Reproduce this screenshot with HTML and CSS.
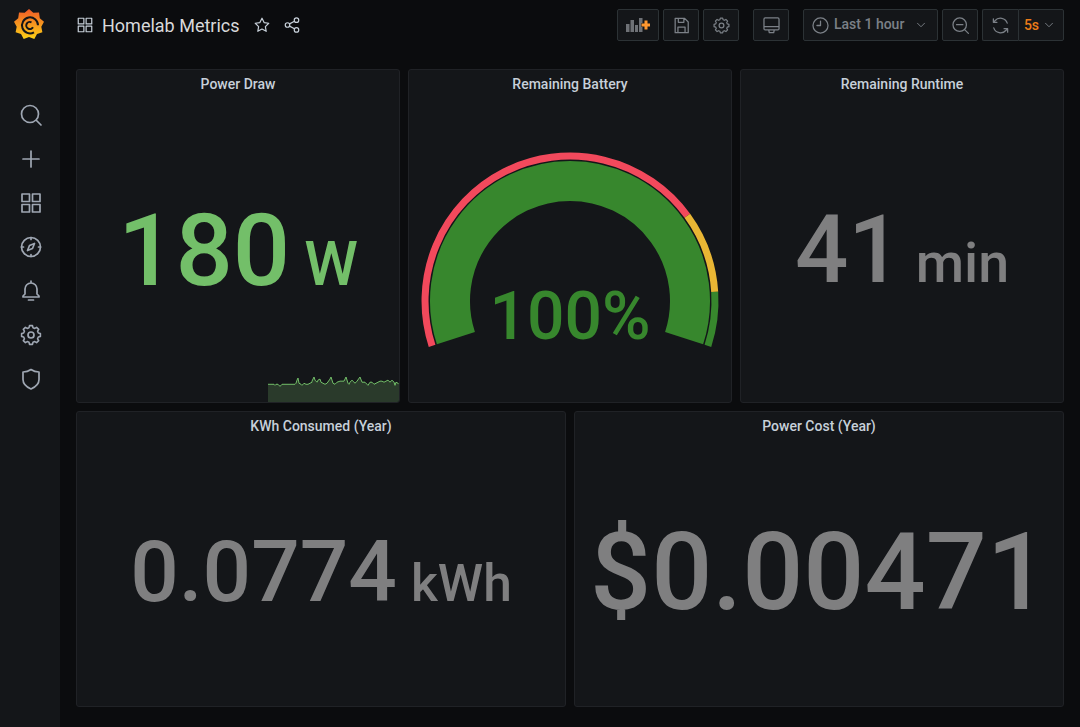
FILE: index.html
```html
<!DOCTYPE html>
<html lang="en">
<head>
  <meta charset="UTF-8">
  <title>Homelab Metrics</title>
  <link rel="stylesheet" href="styles.css">
</head>
<body>
  <nav class="sidemenu">
    <a class="logo">
      <svg width="30" height="31" viewBox="0 0 30 31">
        <defs>
          <linearGradient id="grafana" x1="0" y1="1" x2="0" y2="0">
            <stop offset="0" stop-color="#fcd116"/>
            <stop offset="1" stop-color="#f05a28"/>
          </linearGradient>
        </defs>
        <path fill="url(#grafana)" d="M15 0L19.300 3.750 25 3.600 25.800 9.250 30 12.800 27.300 17.700 28.400 23.300 23 25 20.300 30 15 28 9.700 30 7 25 1.600 23.300 2.700 17.700 0 12.800 4.200 9.250 5 3.600 10.700 3.750z"/>
        <g transform="translate(.5 .8)">
          <path fill="none" stroke="#141619" stroke-width="2" d="M23.500 15.500a8 8 0 1 0-4 7"/>
          <path fill="none" stroke="#141619" stroke-width="2" d="M18.500 17.500a3.600 3.600 0 1 1-1.500-5"/>
        </g>
      </svg>
    </a>
    <a class="side-icon">
      <svg viewBox="0 0 24 24"><circle cx="11" cy="11" r="8.500"/><path d="M17.500 17.500L22 22"/></svg>
    </a>
    <a class="side-icon">
      <svg viewBox="0 0 24 24"><path d="M12 4v16M4 12h16"/></svg>
    </a>
    <a class="side-icon">
      <svg viewBox="0 0 24 24"><path d="M3 3h7.500v7.500H3zM13.500 3H21v7.500h-7.500zM3 13.500h7.500V21H3zM13.500 13.500H21V21h-7.500z"/></svg>
    </a>
    <a class="side-icon">
      <svg viewBox="0 0 24 24"><circle cx="12" cy="12" r="9.500"/><path d="M15.500 8.500l-2 5-5 2 2-5z"/><path d="M12 2.500v2M12 19.500v2M2.500 12h2M19.500 12h2"/></svg>
    </a>
    <a class="side-icon">
      <svg viewBox="0 0 24 24"><path d="M12 4a6 6 0 0 0-6 6v5l-2 2v1h16v-1l-2-2v-5a6 6 0 0 0-6-6zM12 2v2M9.500 21h5"/></svg>
    </a>
    <a class="side-icon">
      <svg viewBox="0 0 24 24"><circle cx="12" cy="12" r="3"/><path transform="translate(.6 .6) scale(.95)" d="M9.930 4.270L10.440 2.120 13.560 2.120 14.070 4.270 16 5.070 17.880 3.910 20.090 6.120 18.930 8 19.730 9.930 21.880 10.440 21.880 13.560 19.730 14.070 18.930 16 20.090 17.880 17.880 20.090 16 18.930 14.070 19.730 13.560 21.880 10.440 21.880 9.930 19.730 8 18.930 6.120 20.090 3.910 17.880 5.070 16 4.270 14.070 2.120 13.560 2.120 10.440 4.270 9.930 5.070 8 3.910 6.120 6.120 3.910 8 5.070z"/></svg>
    </a>
    <a class="side-icon">
      <svg viewBox="0 0 24 24"><path d="M12 2.500c2.500 1.800 5 2.500 8 2.500v7.500c0 4.500-3.500 7.500-8 9.500-4.500-2-8-5-8-9.500V5c3 0 5.500-.7 8-2.500z"/></svg>
    </a>
  </nav>

  <main class="content">
    <header class="topbar">
      <div class="title-group">
        <svg class="icon title-icon" viewBox="0 0 24 24"><path d="M3 3h7.500v7.500H3zM13.500 3H21v7.500h-7.500zM3 13.500h7.500V21H3zM13.500 13.500H21V21h-7.500z"/></svg>
        <span class="dash-title">Homelab Metrics</span>
        <svg class="icon star" viewBox="0 0 24 24"><path d="M12 3l2.800 5.800 6.200.9-4.500 4.400 1.100 6.300-5.600-3-5.600 3 1.100-6.300L3 9.700l6.200-.9z"/></svg>
        <svg class="icon share" viewBox="0 0 24 24"><circle cx="18" cy="5.500" r="3"/><circle cx="6" cy="12" r="3"/><circle cx="18" cy="18.500" r="3"/><path d="M8.700 10.500l6.600-3.500M8.700 13.500l6.600 3.500"/></svg>
      </div>
      <div class="toolbar">
        <button class="btn btn-add">
          <svg width="24" height="14" viewBox="0 0 24 14">
            <path fill="#6e7176" d="M0 6h3.500v8H0zM4.500 2H8v12H4.500zM9 7h3v7H9zM13 0h3.500v14H13z"/>
            <path fill="#ff9830" stroke="#141619" paint-order="stroke" d="M18.500 2.500h3v3h3v3h-3v3h-3v-3h-3v-3h3z"/>
          </svg>
        </button>
        <button class="btn">
          <svg class="icon" viewBox="0 0 24 24"><path d="M4 3h12l4.500 4.500V21H4zM8 3v5h7V3M7.500 21v-7h9v7"/></svg>
        </button>
        <button class="btn">
          <svg class="icon" viewBox="0 0 24 24"><circle cx="12" cy="12" r="3"/><path transform="translate(.6 .6) scale(.95)" d="M9.930 4.270L10.440 2.120 13.560 2.120 14.070 4.270 16 5.070 17.880 3.910 20.090 6.120 18.930 8 19.730 9.930 21.880 10.440 21.880 13.560 19.730 14.070 18.930 16 20.090 17.880 17.880 20.090 16 18.930 14.070 19.730 13.560 21.880 10.440 21.880 9.930 19.730 8 18.930 6.120 20.090 3.910 17.880 5.070 16 4.270 14.070 2.120 13.560 2.120 10.440 4.270 9.930 5.070 8 3.910 6.120 6.120 3.910 8 5.070z"/></svg>
        </button>
        <button class="btn tv">
          <svg class="icon" viewBox="0 0 24 24"><path d="M4 2.500h16a1.500 1.500 0 0 1 1.500 1.500v12a1.500 1.500 0 0 1-1.500 1.500H4A1.500 1.500 0 0 1 2.500 16V4A1.500 1.500 0 0 1 4 2.500zM2.500 13.500h19M8.500 17.500l.7 3.500h5.600l.7-3.500"/></svg>
        </button>
        <button class="btn time-picker">
          <svg class="icon" viewBox="0 0 24 24"><circle cx="12" cy="12" r="9.500"/><path d="M12 6.500V12H7.500"/></svg>
          <span>Last 1 hour</span>
          <svg class="icon chevron" viewBox="0 0 24 24"><path d="M6 9l6 6 6-6"/></svg>
        </button>
        <button class="btn">
          <svg class="icon" viewBox="0 0 24 24"><circle cx="11" cy="11" r="8.500"/><path d="M17.500 17.500L22 22M7 11h8"/></svg>
        </button>
        <div class="refresh">
          <button class="btn refresh-icon">
            <svg class="icon" viewBox="0 0 24 24"><path d="M20.500 9A9 9 0 0 0 5 6L3 8M3 3.500V8h4.500M3.500 15A9 9 0 0 0 19 18l2-2M21 20.500V16h-4.500"/></svg>
          </button>
          <button class="btn refresh-rate">
            <span>5s</span>
            <svg class="icon chevron" viewBox="0 0 24 24"><path d="M6 9l6 6 6-6"/></svg>
          </button>
        </div>
      </div>
    </header>

    <section class="dashboard">
      <div class="row row-top">
        <article class="panel">
          <h2 class="panel-title">Power Draw</h2>
          <div class="stat stat-power">
            <div><span class="value green">180</span><span class="unit green">W</span></div>
          </div>
          <svg class="sparkline" viewBox="0 0 131 24" preserveAspectRatio="none">
            <path class="spark-fill" d="M0 7L6 7 7 8 8 7 10 7 12 9 14 7 27 7 28 6 29 3 30 1 31 6 33 7 34 8 36 6 38 7 40 7 42 6 44 5 44 4 46 0 47 3 49 5 50 3 52 2 53 5 55 6 57 7 59 6 62 2 63 0 65 6 67 7 69 5 72 4 76 4 78 0 80 6 81 7 82 5 84 3 85 4 87 6 89 4 92 0 94 5 97 5 99 7 100 8 102 5 104 5 106 7 108 6 110 5 112 4 114 4 116 5 118 4 120 3 122 5 124 3 126 5 127 8 128 5 130 6 131 7V24H0z"/>
            <path class="spark-line" d="M0 7L6 7 7 8 8 7 10 7 12 9 14 7 27 7 28 6 29 3 30 1 31 6 33 7 34 8 36 6 38 7 40 7 42 6 44 5 44 4 46 0 47 3 49 5 50 3 52 2 53 5 55 6 57 7 59 6 62 2 63 0 65 6 67 7 69 5 72 4 76 4 78 0 80 6 81 7 82 5 84 3 85 4 87 6 89 4 92 0 94 5 97 5 99 7 100 8 102 5 104 5 106 7 108 6 110 5 112 4 114 4 116 5 118 4 120 3 122 5 124 3 126 5 127 8 128 5 130 6 131 7"/>
          </svg>
        </article>
        <article class="panel">
          <h2 class="panel-title">Remaining Battery</h2>
          <svg class="gauge" width="324" height="300" viewBox="0 0 324 300">
            <!-- centre 162,218, sweep 216deg, thresholds at 75% and 90% -->
            <path class="g-red" d="M24.100 262.800A145 145 0 0 1 279.300 132.800"/>
            <path class="g-yellow" d="M279.300 132.800A145 145 0 0 1 306.700 208.900"/>
            <path class="g-green" d="M306.700 208.900A145 145 0 0 1 299.900 262.800"/>
            <path class="g-main" d="M47.900 255.100A120 120 0 1 1 276.100 255.100"/>
          </svg>
          <div class="gauge-value">100%</div>
        </article>
        <article class="panel">
          <h2 class="panel-title">Remaining Runtime</h2>
          <div class="stat stat-runtime">
            <div><span class="value grey">41</span><span class="unit grey">min</span></div>
          </div>
        </article>
      </div>
      <div class="row row-bottom">
        <article class="panel">
          <h2 class="panel-title">KWh Consumed (Year)</h2>
          <div class="stat stat-kwh">
            <div><span class="value grey">0.0774</span><span class="unit grey">kWh</span></div>
          </div>
        </article>
        <article class="panel">
          <h2 class="panel-title">Power Cost (Year)</h2>
          <div class="stat stat-cost">
            <div><span class="value grey">$0.00471</span></div>
          </div>
        </article>
      </div>
    </section>
  </main>
</body>
</html>
```

FILE: styles.css
```css
* {
  box-sizing: border-box;
}
html, body {
  margin: 0;
  height: 100%;
  overflow: hidden;
}
body {
  display: flex;
  font-family: Roboto, sans-serif;
  background: #0b0c0e;
  color: #c7d0d9;
}
svg {
  display: block;
}
.icon {
  width: 19px;
  height: 19px;
  flex: none;
  fill: none;
  stroke: currentColor;
  stroke-width: 1.6;
  stroke-linejoin: round;
  stroke-linecap: round;
}

/* side menu */
.sidemenu {
  width: 60px;
  flex: none;
  display: flex;
  flex-direction: column;
  align-items: center;
  background: #141619;
}
.logo {
  height: 44px;
  margin-top: 9px;
  margin-left: -2px;
  margin-bottom: 40px;
}
.side-icon {
  width: 60px;
  height: 44px;
  padding-left: 2px;
  display: flex;
  align-items: center;
  justify-content: center;
  color: #9fa7b3;
}
.side-icon svg {
  width: 24px;
  height: 24px;
  fill: none;
  stroke: currentColor;
  stroke-width: 1.7;
  stroke-linejoin: round;
  stroke-linecap: round;
}

/* top bar */
.content {
  flex: 1;
  min-width: 0;
  padding: 0 16px;
}
.topbar {
  height: 69px;
  padding-top: 9px;
  display: flex;
  justify-content: space-between;
  align-items: flex-start;
}
.title-group {
  height: 32px;
  display: flex;
  align-items: center;
  color: #c7d0d9;
}
.title-icon {
  width: 18px;
  height: 18px;
  margin-right: 8px;
}
.dash-title {
  font-size: 18px;
  color: #d8d9da;
  margin-right: 13px;
}
.star {
  width: 18px;
  height: 18px;
  margin-right: 12px;
}
.share {
  width: 18px;
  height: 18px;
}
.toolbar {
  display: flex;
  align-items: flex-start;
}
.btn {
  height: 32px;
  width: 36px;
  margin-left: 4px;
  padding: 0;
  display: flex;
  align-items: center;
  justify-content: center;
  font-family: inherit;
  font-size: 14px;
  font-weight: 500;
  color: #7b8087;
  background: #141619;
  border: 1px solid #2c3235;
  border-radius: 2px;
}
.btn-add {
  width: 42px;
}
.tv {
  margin-left: 14px;
}
.time-picker {
  width: 135px;
  margin-left: 14px;
  padding: 0 9px 0 7px;
  justify-content: flex-start;
}
.time-picker span {
  margin-left: 4px;
  padding-bottom: 2px;
  flex: 1;
  text-align: left;
}
.btn .chevron {
  width: 14px;
  height: 14px;
}
.refresh {
  display: flex;
  margin-left: 4px;
}
.refresh .btn {
  margin-left: 0;
}
.refresh-icon {
  width: 36px;
  border-right: 0;
  border-radius: 2px 0 0 2px;
}
.refresh-rate {
  width: 46px;
  padding-right: 2px;
  gap: 3px;
  color: #eb7b18;
  border-radius: 0 2px 2px 0;
}
.refresh-rate .chevron {
  color: #7b8087;
}

/* panels */
.dashboard {
  display: flex;
  flex-direction: column;
  gap: 8px;
}
.row {
  display: flex;
  gap: 8px;
}
.row-top {
  height: 334px;
}
.row-bottom {
  height: 296px;
}
.panel {
  position: relative;
  flex: 1;
  min-width: 0;
  display: flex;
  flex-direction: column;
  background: #141619;
  border: 1px solid #202226;
  border-radius: 3px;
  overflow: hidden;
}
.panel-title {
  margin: 0;
  height: 28px;
  line-height: 28px;
  flex: none;
  text-align: center;
  font-size: 14px;
  font-weight: 500;
  color: #c7d0d9;
}
.stat {
  flex: 1;
  display: flex;
  align-items: center;
  justify-content: center;
  font-weight: 500;
  line-height: 1;
  white-space: nowrap;
}
.green {
  color: #73bf69;
}
.grey {
  color: #7f7f80;
}
.stat-power .value {
  font-size: 101px;
}
.stat-power .unit {
  font-size: 61px;
  margin-left: 14px;
}
.stat-runtime .value {
  font-size: 94px;
}
.stat-runtime .unit {
  font-size: 55.500px;
  margin-left: 14px;
}
.stat-kwh .value {
  font-size: 85.500px;
}
.stat-kwh .unit {
  font-size: 51.500px;
  margin-left: 14px;
}
.stat-cost .value {
  font-size: 107.600px;
}
.sparkline {
  position: absolute;
  right: 0;
  bottom: 0;
  width: 131px;
  height: 25px;
}
.spark-fill {
  fill: #2a3a2b;
}
.spark-line {
  fill: none;
  stroke: #73bf69;
  stroke-width: 1;
  vector-effect: non-scaling-stroke;
}

/* gauge */
.gauge {
  position: absolute;
  left: -1px;
  top: 13px;
  fill: none;
}
.g-red, .g-yellow, .g-green {
  stroke-width: 7;
}
.g-red {
  stroke: #f2495c;
}
.g-yellow {
  stroke: #e9b634;
}
.g-green {
  stroke: #37872d;
}
.g-main {
  stroke: #37872d;
  stroke-width: 40;
}
.gauge-value {
  position: absolute;
  left: 0;
  right: 0;
  top: 207px;
  text-align: center;
  font-size: 66px;
  font-weight: 500;
  line-height: 80px;
  color: #37872d;
}
```
